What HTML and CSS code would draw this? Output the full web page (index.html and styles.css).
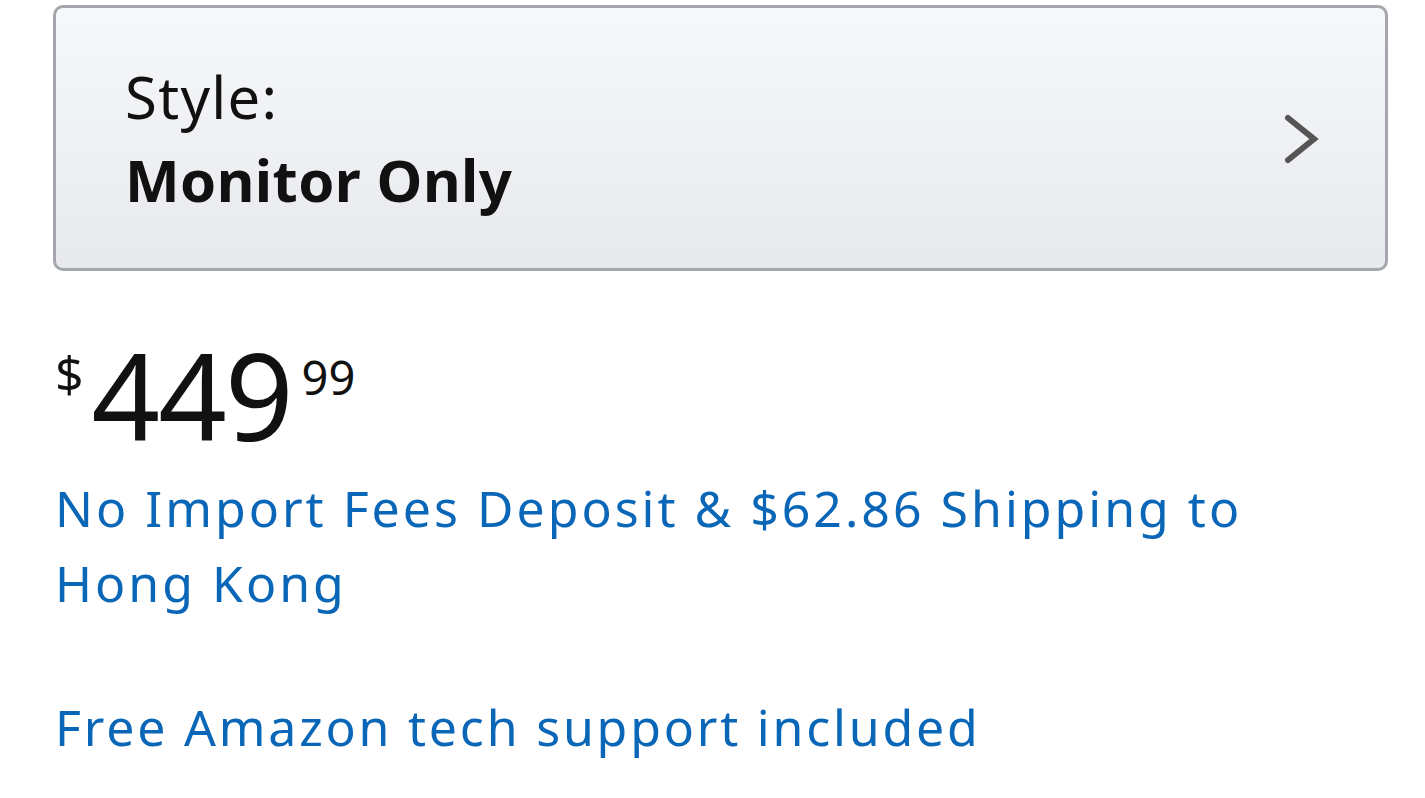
FILE: index.html
```html
<!DOCTYPE html>
<html lang="en">
<head>
<meta charset="utf-8">
<title>Product</title>
<link rel="stylesheet" href="styles.css">
</head>
<body>
<div class="page">
  <div class="style-box">
    <div class="style-text">
      <div class="style-label">Style:</div>
      <div class="style-value">Monitor Only</div>
    </div>
    <svg class="chevron" width="36" height="52" viewBox="0 0 36 52">
      <polyline points="5,5 31,26 5,47" fill="none" stroke="#555" stroke-width="6" stroke-linecap="round" stroke-linejoin="miter"/>
    </svg>
  </div>
  <div class="price">
    <span class="cur">$</span><span class="whole">449</span><span class="frac">99</span>
  </div>
  <div class="link ship">No Import Fees Deposit &amp; $62.86 Shipping to Hong Kong</div>
  <div class="link support">Free Amazon tech support included</div>
</div>
</body>
</html>
```
FILE: styles.css
```css
html, body {
  margin: 0;
  padding: 0;
  background: #fff;
}
.page {
  padding: 5px 37px 0 53px;
  font-family: "Noto Sans", "Open Sans", sans-serif;
  color: #111;
}
.style-box {
  height: 260px;
  border: 3px solid #a4a7ab;
  border-radius: 10px;
  background: linear-gradient(#f7f8fa, #e8e9ed);
  display: flex;
  align-items: center;
  justify-content: space-between;
  padding: 0 66px 0 69px;
}
.style-text {
  display: flex;
  flex-direction: column;
}
.style-label {
  font-size: 58px;
  line-height: 83px;
  letter-spacing: 1.3px;
}
.style-value {
  font-size: 58px;
  line-height: 83px;
  font-weight: 700;
  letter-spacing: 0.4px;
}
.chevron {
  display: block;
  margin-top: 1px;
}
.price {
  display: flex;
  align-items: flex-start;
  margin-top: 80px;
  margin-left: 2px;
  height: 120px;
}
.cur {
  font-size: 50px;
  line-height: 60px;
  margin-right: 8px;
  margin-top: -8px;
}
.whole {
  font-size: 120px;
  line-height: 120px;
  margin-top: -16px;
  letter-spacing: -2px;
}
.frac {
  font-size: 47px;
  line-height: 60px;
  margin-left: 10px;
  margin-top: -4px;
}
.link {
  color: #0a66b7;
  font-size: 50px;
  line-height: 75px;
  letter-spacing: 3px;
}
.ship {
  margin-top: 0;
  margin-left: 2px;
}
.support {
  margin-top: 69px;
  margin-left: 2px;
  letter-spacing: 2.8px;
}
```
